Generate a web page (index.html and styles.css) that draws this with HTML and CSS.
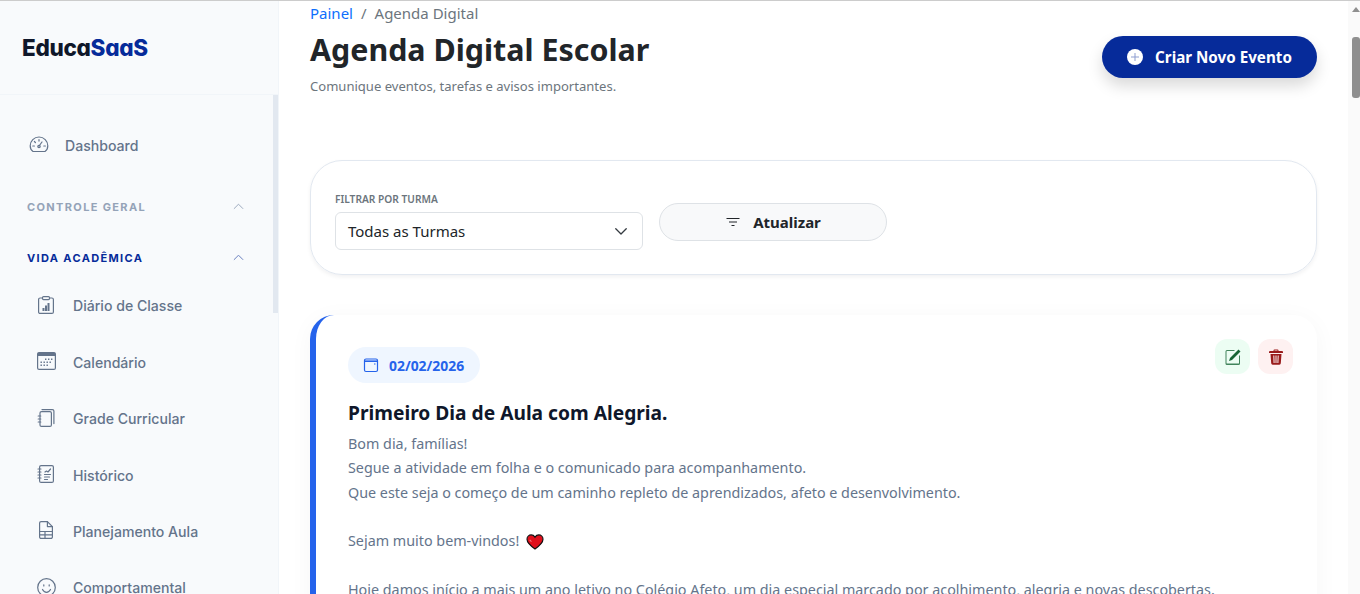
FILE: index.html
```html
<!DOCTYPE html>
<html lang="pt-br">
<head>
    <title>Agenda Digital</title>
    <meta name="viewport" content="width=device-width, initial-scale=1.0" />
    <link rel="stylesheet" href="styles.css">
</head>

<body>
    <aside class="sidebar">
        <div class="brand"><span class="brand-dark">Educa</span><span class="brand-blue">SaaS</span></div>
        <nav class="nav">
            <a class="nav-top">
                <svg class="ico" viewBox="0 0 20 20"><path d="M4 16.500h12c1.500-1 2.800-3 2.800-5.700A8.800 8.800 0 0 0 1.200 10.800c0 2.700 1.300 4.700 2.800 5.700z"/><path d="M10 11l3-4M10 4.500v1.600M5.400 6.500l1 1M3.800 11h1.600M14.800 11h1.600"/><circle cx="10" cy="11.500" r="1.200"/></svg>
                Dashboard
            </a>
            <div class="nav-group">
                <span>CONTROLE GERAL</span>
                <svg class="chev" viewBox="0 0 12 12"><path d="M1 8.500l5-5 5 5"/></svg>
            </div>
            <div class="nav-group active">
                <span>VIDA ACADÊMICA</span>
                <svg class="chev" viewBox="0 0 12 12"><path d="M1 8.500l5-5 5 5"/></svg>
            </div>
            <ul class="nav-list">
                <li>
                    <svg class="ico" viewBox="0 0 20 20"><rect x="1.600" y="2" width="14.800" height="15.400" rx="1.500"/><rect x="5.500" y=".6" width="7" height="3" rx="1" class="bg"/><path d="M5.500 12h2v3h-2zM8 9.500h2V15H8zM10.500 7h2v8h-2z" class="solid"/></svg>
                    Diário de Classe
                </li>
                <li>
                    <svg class="ico" viewBox="0 0 20 20"><rect x=".6" y=".6" width="17.800" height="16.800" rx="1.500"/><path d="M.6 4V2.100A1.500 1.500 0 0 1 2.100.6h14.800a1.500 1.500 0 0 1 1.500 1.500V4z" class="solid"/><path d="M8 6.500h1.400v1.400H8zM11 6.500h1.400v1.400H11zM14 6.500h1.400v1.400H14zM3.500 9.500h1.400v1.400H3.500zM6.500 9.500h1.400v1.400H6.500zM9.500 9.500h1.400v1.400H9.500zM12.500 9.500h1.400v1.400h-1.400zM3.500 12.500h1.400v1.400H3.500zM6.500 12.500h1.400v1.400H6.500zM9.500 12.500h1.400v1.400H9.500z" class="dots"/></svg>
                    Calendário
                </li>
                <li>
                    <svg class="ico" viewBox="0 0 20 20"><rect x="3" y="2.600" width="11.400" height="14.800" rx="1.500"/><path d="M5 .6h10.400a1.500 1.500 0 0 1 1.500 1.500v12.500M1.200 7h2.600M1.200 10h2.600M1.200 13h2.600"/></svg>
                    Grade Curricular
                </li>
                <li>
                    <svg class="ico" viewBox="0 0 20 20"><rect x="2.600" y=".6" width="13.800" height="16.800" rx="1.500"/><path d="M1 4h3M1 7h3M1 10h3M1 13h3M7.500 9.500h6M7.500 12h5M7.500 14.500h3M8 7l1.500-1 1.500 1 2.500-3"/></svg>
                    Histórico
                </li>
                <li>
                    <svg class="ico" viewBox="0 0 20 20"><path d="M2.600 2.100A1.500 1.500 0 0 1 4.100.6h6.300l5 5v10.300a1.500 1.500 0 0 1-1.500 1.500H4.100a1.500 1.500 0 0 1-1.500-1.500z"/><path d="M10.400.6v5h5M2.600 10.500h12.800M2.600 13.800h12.800M8 10.500v6.900"/></svg>
                    Planejamento Aula
                </li>
                <li>
                    <svg class="ico" viewBox="0 0 20 20"><circle cx="9.500" cy="9.500" r="8.800"/><path d="M5.500 11.500c1 2 2.400 2.800 4 2.800s3-.8 4-2.800M6.800 6.800v1.200M12.200 6.800v1.200"/></svg>
                    Comportamental
                </li>
            </ul>
        </nav>
        <div class="side-thumb"></div>
    </aside>

    <main class="content">
        <div class="breadcrumb"><a>Painel</a><span class="sep">/</span><span>Agenda Digital</span></div>
        <header class="page-head">
            <div>
                <h1>Agenda Digital Escolar</h1>
                <p class="sub">Comunique eventos, tarefas e avisos importantes.</p>
            </div>
            <button class="btn-new">
                <svg viewBox="0 0 16 16" width="16" height="16"><circle cx="8" cy="8" r="8" fill="#fff"/><path d="M8 4v8M4 8h8" stroke="#8d9dd0" stroke-width="1"/></svg>
                Criar Novo Evento
            </button>
        </header>

        <section class="filter-card">
            <div class="field">
                <label>FILTRAR POR TURMA</label>
                <div class="select">
                    Todas as Turmas
                    <svg viewBox="0 0 16 16" width="14" height="14"><path d="M2 5.500L8 11.500l6-6" fill="none" stroke="#343a40" stroke-width="1.500" stroke-linecap="round" stroke-linejoin="round"/></svg>
                </div>
            </div>
            <button class="btn-refresh">
                <svg viewBox="0 0 16 16" width="16" height="16"><path d="M1.500 4.500h13M4 8h8M6.500 11.500h3" fill="none" stroke="#212529" stroke-width="1"/></svg>
                Atualizar
            </button>
        </section>

        <article class="event-card">
            <div class="event-actions">
                <span class="act act-edit">
                    <svg viewBox="0 0 16 16" width="16" height="16"><path d="M.5 2.500A1.500 1.500 0 0 1 2 1h7.500v1H2a.5.500 0 0 0-.5.500v11.500a.5.500 0 0 0 .5.500h11.500a.5.500 0 0 0 .5-.500V6.500h1v8a1.500 1.500 0 0 1-1.500 1.500H2A1.500 1.500 0 0 1 .5 14.500z" fill="#166534" opacity=".8"/><path d="M13.500.500l2 2-8.500 8.500-3 1 1-3z" fill="#166534"/></svg>
                </span>
                <span class="act act-del">
                    <svg viewBox="0 0 16 16" width="16" height="16"><path d="M5.500 2V1.500A1 1 0 0 1 6.500.500h3a1 1 0 0 1 1 1V2H14a1 1 0 0 1 1 1v1H1V3a1 1 0 0 1 1-1zM6.500 1.500V2h3v-.500z" fill="#991b1b"/><path d="M2.500 5h11l-.7 9.300a1.500 1.500 0 0 1-1.500 1.400H4.700a1.500 1.500 0 0 1-1.500-1.400zM5.300 6.500l.3 7.500h1l-.3-7.500zm2.200 0V14h1V6.500zm2.200 0L9.400 14h1l.3-7.500z" fill="#991b1b" fill-rule="evenodd"/></svg>
                </span>
            </div>
            <div class="date-pill">
                <svg viewBox="0 0 16 16" width="16" height="16"><rect x="1.500" y="2" width="13" height="12.500" rx="1.500" fill="none" stroke="#2563eb" stroke-width="1.200"/><path d="M1.500 4.200h13" stroke="#2563eb" stroke-width="1.600"/><path d="M11 7h1.500" stroke="#2563eb" stroke-width="1.200"/></svg>
                02/02/2026
            </div>
            <h2>Primeiro Dia de Aula com Alegria.</h2>
            <p class="event-text">Bom dia, famílias!
Segue a atividade em folha e o comunicado para acompanhamento.
Que este seja o começo de um caminho repleto de aprendizados, afeto e desenvolvimento.

Sejam muito bem-vindos! <svg class="heart" viewBox="0 0 20 18" width="18" height="16"><path d="M10 16.800C4 12.500 1 9.500 1 5.800 1 3 3.200 1 5.700 1 7.500 1 9 2 10 3.500 11 2 12.500 1 14.300 1 16.800 1 19 3 19 5.800c0 3.700-3 6.700-9 11z" fill="#e0101c" stroke="#111" stroke-width="1.300"/><path d="M4 6.500l2 2" stroke="#f47a80" stroke-width="1.200"/></svg>

Hoje damos início a mais um ano letivo no Colégio Afeto, um dia especial marcado por acolhimento, alegria e novas descobertas.</p>
        </article>
    </main>

    <div class="scrollbar">
        <span class="arrow"></span>
        <div class="thumb"></div>
    </div>
</body>

</html>
```
FILE: styles.css
```css
* {
    box-sizing: border-box;
}

html, body {
    height: 100%;
    overflow: hidden;
}

body {
    display: flex;
    margin: 0;
    background: #fff;
    color: #212529;
    font-family: "Noto Sans", sans-serif;
    border-top: 1px solid #ccc;
}

/* sidebar */
.sidebar {
    position: relative;
    flex: 0 0 279px;
    background: #f8fafc;
    border-right: 1px solid #f1f5f9;
    font-family: Inter, sans-serif;
    overflow: hidden;
}

.brand {
    height: 94px;
    padding: 33px 22px 0;
    border-bottom: 1px solid #f1f5f9;
    font-size: 22.500px;
    font-weight: 800;
    font-feature-settings: "cv11";
    letter-spacing: -0.300px;
    line-height: 27px;
}

.brand-dark {
    color: #0f172a;
}

.brand-blue {
    color: #062b9a;
}

.nav {
    padding-top: 28px;
}

.nav-top {
    display: flex;
    align-items: center;
    gap: 16px;
    height: 44px;
    margin-bottom: 19.700px;
    padding-left: 29px;
    color: #64748b;
    font-size: 14.100px;
    font-weight: 500;
}

.ico {
    width: 20px;
    height: 20px;
    flex: none;
    fill: none;
    stroke: #64748b;
    stroke-width: 1.200;
    stroke-linecap: round;
    stroke-linejoin: round;
}

.ico .bg {
    fill: #f8fafc;
}

.ico .solid {
    fill: #64748b;
    stroke: none;
}

.ico .dots {
    fill: #64748b;
    stroke: none;
}

.nav-group {
    display: flex;
    align-items: center;
    justify-content: space-between;
    height: 40px;
    margin-top: 11px;
    padding: 0 34px 0 27px;
    color: #94a3b8;
    font-size: 11px;
    font-weight: 700;
    letter-spacing: 1.350px;
}

.nav-group.active {
    color: #062b9a;
}

.chev {
    width: 11px;
    height: 11px;
    fill: none;
    stroke: #94a3b8;
    stroke-width: 1;
}

.nav-group.active .chev {
    stroke: #5b74b8;
}

.nav-list {
    list-style: none;
    margin: 0;
    padding: 0;
}

.nav-list li {
    display: flex;
    align-items: center;
    gap: 16px;
    height: 56.400px;
    padding-left: 37px;
    color: #64748b;
    font-size: 14.100px;
    font-weight: 500;
}

.side-thumb {
    position: absolute;
    top: 94px;
    right: 0;
    width: 5px;
    height: 218px;
    background: #e2e8f0;
}

/* main */
.content {
    flex: 1;
    min-width: 0;
    padding: 0 43px 0 31px;
}

.breadcrumb {
    display: flex;
    gap: 8px;
    color: #6c757d;
    font-size: 15px;
    line-height: 24px;
}

.breadcrumb a {
    color: #0d6efd;
}

.page-head {
    display: flex;
    justify-content: space-between;
    align-items: flex-start;
}

h1 {
    margin: 1px 0 0;
    font-size: 30.400px;
    font-weight: 700;
    line-height: 48px;
}

.sub {
    margin: 2px 0 0;
    color: #6c757d;
    font-size: 13.050px;
    line-height: 20px;
}

.btn-new {
    display: flex;
    align-items: center;
    justify-content: center;
    gap: 12px;
    width: 215px;
    height: 42px;
    margin-top: 11px;
    background: #062b9a;
    border: 0;
    border-radius: 21px;
    box-shadow: 0 8px 15px rgba(0, 0, 0, 0.15);
    color: #fff;
    font-family: inherit;
    font-size: 15.200px;
    font-weight: 700;
}

.filter-card {
    display: flex;
    align-items: flex-end;
    gap: 16px;
    height: 115px;
    margin-top: 64px;
    padding: 0 24px 24px;
    border: 1px solid #e2e8f0;
    border-radius: 32px;
    box-shadow: 0 2px 4px rgba(15, 23, 42, 0.06);
}

.field label {
    display: block;
    margin-bottom: 5px;
    color: #6c757d;
    font-size: 10.200px;
    font-weight: 600;
    line-height: 16px;
}

.select {
    display: flex;
    align-items: center;
    justify-content: space-between;
    width: 308px;
    height: 38px;
    padding: 0 14px 0 12px;
    border: 1px solid #dee2e6;
    border-radius: 6px;
    color: #212529;
    font-size: 15px;
}

.btn-refresh {
    display: flex;
    align-items: center;
    justify-content: center;
    gap: 12px;
    width: 228px;
    height: 38px;
    margin-bottom: 9px;
    background: #f8f9fa;
    border: 1px solid #dee2e6;
    border-radius: 19px;
    color: #212529;
    font-family: inherit;
    font-size: 15px;
    font-weight: 700;
}

.event-card {
    position: relative;
    height: 400px;
    margin-top: 40px;
    padding: 32px;
    border-left: 6px solid #2563eb;
    border-radius: 24px;
    box-shadow: 0 4px 24px rgba(15, 23, 42, 0.04);
}

.event-actions {
    position: absolute;
    top: 24px;
    right: 24px;
    display: flex;
    gap: 8px;
}

.act {
    display: flex;
    align-items: center;
    justify-content: center;
    width: 35px;
    height: 35px;
    border-radius: 12px;
}

.act-edit {
    background: #ecfdf3;
}

.act-del {
    background: #fef1f1;
}

.date-pill {
    display: inline-flex;
    align-items: center;
    gap: 10px;
    height: 36px;
    padding: 0 16px 0 15px;
    background: #eff6ff;
    border-radius: 18px;
    color: #2563eb;
    font-size: 13.900px;
    font-weight: 700;
}

h2 {
    margin: 15px 0 4px;
    color: #0f172a;
    font-size: 19.200px;
    font-weight: 700;
    line-height: 30px;
}

.event-text {
    margin: 0;
    color: #64748b;
    font-size: 14.330px;
    line-height: 24.330px;
    white-space: pre-line;
}

.heart {
    margin-left: 3px;
    vertical-align: -4px;
}

/* barra de rolagem da janela */
.scrollbar {
    position: absolute;
    top: 1px;
    right: 0;
    bottom: 0;
    width: 12px;
    padding-left: 4px;
    background: #fafafa;
}

.arrow {
    display: block;
    width: 0;
    margin-top: 6px;
    border-left: 4px solid transparent;
    border-right: 4px solid transparent;
    border-bottom: 5px solid #8f8f8f;
}

.thumb {
    width: 8px;
    height: 61px;
    margin-top: 25px;
    background: #8f8f8f;
    border-radius: 3px;
}
```
